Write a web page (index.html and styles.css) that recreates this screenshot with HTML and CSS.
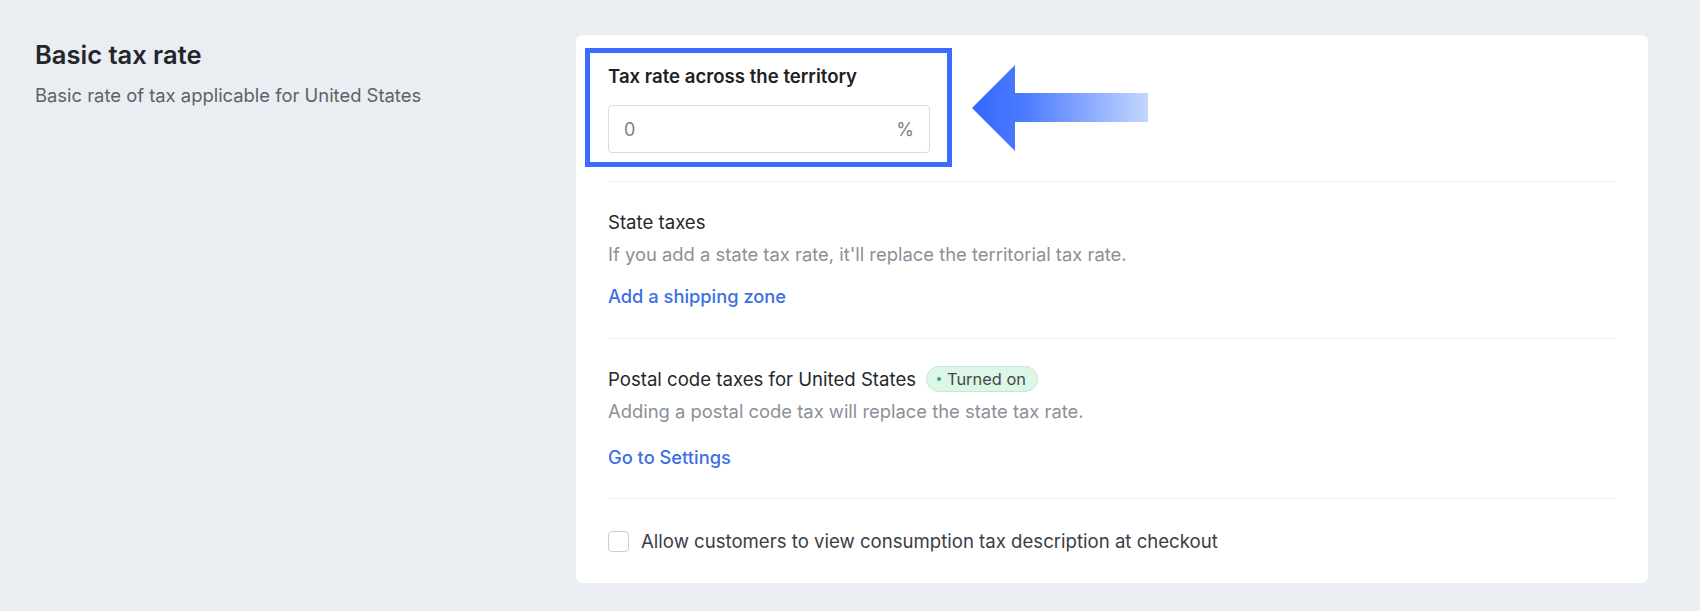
FILE: index.html
```html
<!DOCTYPE html>
<html>
<head>
<meta charset="utf-8">
<link rel="stylesheet" href="styles.css">
</head>
<body>
<div class="page">
  <div class="intro">
    <h2 class="intro-title">Basic tax rate</h2>
    <p class="intro-text">Basic rate of tax applicable for United States</p>
  </div>
  <div class="card">
    <div class="section section-first">
      <div class="field">
        <label class="field-label">Tax rate across the territory</label>
        <div class="input">
          <span class="input-value">0</span>
          <span class="input-suffix">%</span>
        </div>
        <div class="highlight"></div>
        <svg class="arrow" width="176" height="86" viewBox="0 0 176 86">
          <defs>
            <linearGradient id="ag" x1="0" y1="0" x2="1" y2="0">
              <stop offset="0" stop-color="#3366ff"/>
              <stop offset="0.3" stop-color="#4d7bff"/>
              <stop offset="1" stop-color="#c4d6ff"/>
            </linearGradient>
          </defs>
          <polygon points="0,43 43,0 43,28 176,28 176,57 43,57 43,86" fill="url(#ag)"/>
        </svg>
      </div>
    </div>
    <div class="section">
      <div class="row-title">State taxes</div>
      <div class="row-desc">If you add a state tax rate, it'll replace the territorial tax rate.</div>
      <a class="link">Add a shipping zone</a>
    </div>
    <div class="section section-postal">
      <div class="row-title">Postal code taxes for United States <span class="badge"><span class="dot"></span>Turned on</span></div>
      <div class="row-desc">Adding a postal code tax will replace the state tax rate.</div>
      <a class="link">Go to Settings</a>
    </div>
    <div class="section section-last">
      <label class="check"><span class="box"></span>Allow customers to view consumption tax description at checkout</label>
    </div>
  </div>
</div>
</body>
</html>
```
FILE: styles.css
```css
* { box-sizing: border-box; }
html, body { margin: 0; padding: 0; }
body {
  background: #eaedf1;
  font-family: Inter, "Noto Sans", sans-serif;
  color: #25282d;
  width: 1700px;
  height: 611px;
  overflow: hidden;
}
.page {
  display: flex;
  padding: 35px 52px 29px 35px;
}
.intro {
  width: 541px;
  flex-shrink: 0;
}
.intro-title {
  margin: 4px 0 0;
  font-size: 25.5px;
  line-height: 32px;
  font-weight: 600;
  color: #23262b;
}
.intro-text {
  margin: 11px 0 0;
  font-size: 18.4px;
  line-height: 26px;
  color: #5d626b;
}
.card {
  flex: 1;
  background: #fff;
  border-radius: 6px;
  padding: 0 32px;
}
.section {
  padding: 27px 0 29px;
  border-top: 1px solid #eceef1;
}
.section-first {
  border-top: 0;
  padding-top: 28px;
  padding-bottom: 28px;
}
.section-postal { padding-bottom: 28px; }
.section-postal .link { margin-top: 20px; }
.section-last { padding: 29px 0 29px; }
.field {
  position: relative;
  width: 322px;
}
.field-label {
  display: block;
  font-size: 18.6px;
  line-height: 26px;
  font-weight: 600;
  color: #1d2025;
}
.input {
  margin-top: 16px;
  height: 48px;
  border: 1px solid #d8dbe0;
  border-radius: 4px;
  display: flex;
  align-items: center;
  justify-content: space-between;
  padding: 0 15px;
  font-size: 18px;
  color: #7b8088;
}
.highlight {
  position: absolute;
  left: -23px;
  top: -15px;
  width: 367px;
  height: 119px;
  border: 5px solid #3b6cff;
}
.arrow {
  position: absolute;
  left: 364px;
  top: 2px;
}
.row-title {
  font-size: 18.6px;
  line-height: 26px;
  color: #25282d;
  display: flex;
  align-items: center;
}
.row-desc {
  margin-top: 6px;
  font-size: 18.4px;
  line-height: 26px;
  color: #8b9099;
}
.link {
  display: block;
  margin-top: 16px;
  font-size: 18.3px;
  line-height: 26px;
  font-weight: 500;
  color: #3d6ee6;
}
.badge {
  display: inline-flex;
  align-items: center;
  margin-left: 10px;
  height: 26px;
  padding: 0 11px 0 10px;
  border-radius: 13px;
  background: #dcf6e8;
  border: 1px solid #bfebd2;
  font-size: 16.4px;
  color: #3f4a45;
}
.dot {
  width: 4px;
  height: 4px;
  border-radius: 50%;
  background: #2fae6a;
  margin-right: 6px;
}
.check {
  display: flex;
  align-items: center;
  font-size: 18.6px;
  line-height: 26px;
  color: #3a3e45;
}
.box {
  width: 21px;
  height: 21px;
  border: 1.5px solid #c9cdd3;
  border-radius: 4px;
  margin-right: 12px;
  background: #fff;
}
```
